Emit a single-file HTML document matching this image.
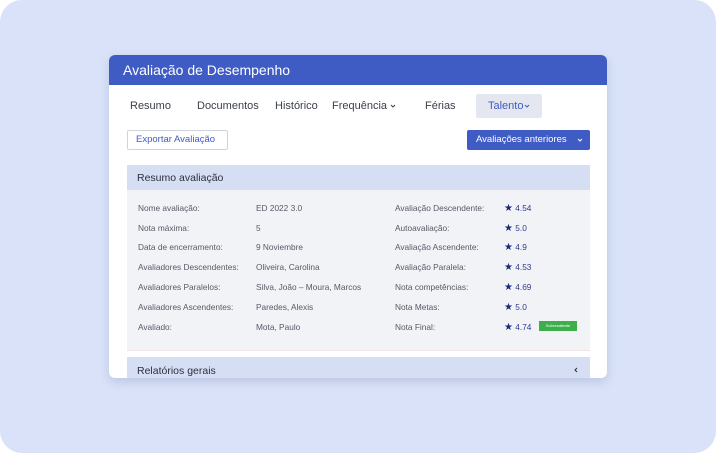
<!DOCTYPE html>
<html><head><meta charset="utf-8"><style>
*{margin:0;padding:0;box-sizing:border-box}
body{width:716px;height:453px;background:#fff;font-family:"Liberation Sans",sans-serif;overflow:hidden}
.bg{position:absolute;left:0;top:0;width:716px;height:453px;background:#d9e2f8;border-radius:22px}
.card{position:absolute;left:109px;top:55px;width:498px;height:323px;background:#fff;border-radius:6px;overflow:hidden;box-shadow:0 4px 10px rgba(60,80,140,.18)}
.hd{height:30px;background:#3f5bc4;color:#fff;font-size:14px;line-height:30px;padding-left:14px}
.t{position:absolute;font-size:11px;color:#3a3f4a;white-space:nowrap}
.tab{top:45px}
.talent{position:absolute;left:367px;top:39px;width:66px;height:24px;background:#e4e7ef;border-radius:2px}
.exp{position:absolute;left:18px;top:75px;width:101px;height:20px;border:1px solid #cfd3dc;border-radius:2px;font-size:9.5px;color:#3f5bc4;line-height:18px;padding-left:8px}
.ant{position:absolute;left:358px;top:75px;width:123px;height:20px;background:#3f5bc4;border-radius:2px;color:#fff;font-size:9.5px;line-height:20px;padding-left:9px}
.sec{position:absolute;left:18px;width:463px}
.sh{height:25px;background:#d5def3;font-size:10.5px;color:#2b3040;line-height:26px;padding-left:10px}
.sb{height:160px;background:#f2f3f7}
.r{position:absolute;font-size:8.3px;color:#555a66;white-space:nowrap}
.v{color:#2e3a8c}
.star{color:#1e2a78;font-size:10px}
.badge{position:absolute;left:430px;top:266px;width:38px;height:10px;background:#3daf4a;color:#fff;font-size:4px;line-height:10px;text-align:center}
svg.ch{display:inline-block;vertical-align:middle}
</style></head><body>
<div class="bg"></div>
<div class="card">
<div class="hd">Avaliação de Desempenho</div>
<div class="talent"></div>
<div class="t tab" style="left:21px">Resumo</div>
<div class="t tab" style="left:88px">Documentos</div>
<div class="t tab" style="left:166px">Histórico</div>
<div class="t tab" style="left:223px">Frequência <svg class="ch" width="6" height="4" viewBox="0 0 6 4"><path d="M1 1l2 2 2-2" fill="none" stroke="#3a3f4a" stroke-width="1"/></svg></div>
<div class="t tab" style="left:316px">Férias</div>
<div class="t tab" style="left:379px;color:#3f5bc4">Talento<svg class="ch" width="6" height="4" viewBox="0 0 6 4" style="margin-left:1px"><path d="M1 1l2 2 2-2" fill="none" stroke="#3f5bc4" stroke-width="1"/></svg></div>
<div class="exp">Exportar Avaliação</div>
<div class="ant">Avaliações anteriores<svg style="position:absolute;right:7px;top:8px" width="6" height="4" viewBox="0 0 6 4"><path d="M1 1l2 2 2-2" fill="none" stroke="#fff" stroke-width="1"/></svg></div>
<div class="sec" style="top:110px"><div class="sh">Resumo avaliação</div><div class="sb"></div></div>
<div style="position:absolute;left:18px;top:295px;width:463px;height:1px;background:#f0e4e4"></div>
<div class="sec" style="top:302px"><div class="sh" style="line-height:28px">Relatórios gerais<svg style="position:absolute;right:12px;top:10px" width="4" height="6" viewBox="0 0 4 6"><path d="M3 1L1 3l2 2" fill="none" stroke="#2b3040" stroke-width="1"/></svg></div></div>

<div class="r" style="left:29px;top:148px">Nome avaliação:</div>
<div class="r" style="left:29px;top:168px">Nota máxima:</div>
<div class="r" style="left:29px;top:187px">Data de encerramento:</div>
<div class="r" style="left:29px;top:207px">Avaliadores Descendentes:</div>
<div class="r" style="left:29px;top:227px">Avaliadores Paralelos:</div>
<div class="r" style="left:29px;top:247px">Avaliadores Ascendentes:</div>
<div class="r" style="left:29px;top:267px">Avaliado:</div>

<div class="r" style="left:147px;top:148px">ED 2022 3.0</div>
<div class="r" style="left:147px;top:168px">5</div>
<div class="r" style="left:147px;top:187px">9 Noviembre</div>
<div class="r" style="left:147px;top:207px">Oliveira, Carolina</div>
<div class="r" style="left:147px;top:227px">Silva, João – Moura, Marcos</div>
<div class="r" style="left:147px;top:247px">Paredes, Alexis</div>
<div class="r" style="left:147px;top:267px">Mota, Paulo</div>

<div class="r" style="left:286px;top:148px">Avaliação Descendente:</div>
<div class="r" style="left:286px;top:168px">Autoavaliação:</div>
<div class="r" style="left:286px;top:187px">Avaliação Ascendente:</div>
<div class="r" style="left:286px;top:207px">Avaliação Paralela:</div>
<div class="r" style="left:286px;top:227px">Nota competências:</div>
<div class="r" style="left:286px;top:247px">Nota Metas:</div>
<div class="r" style="left:286px;top:267px">Nota Final:</div>

<div class="r v" style="left:395px;top:148px"><span class="star">★</span> 4.54</div>
<div class="r v" style="left:395px;top:168px"><span class="star">★</span> 5.0</div>
<div class="r v" style="left:395px;top:187px"><span class="star">★</span> 4.9</div>
<div class="r v" style="left:395px;top:207px"><span class="star">★</span> 4.53</div>
<div class="r v" style="left:395px;top:227px"><span class="star">★</span> 4.69</div>
<div class="r v" style="left:395px;top:247px"><span class="star">★</span> 5.0</div>
<div class="r v" style="left:395px;top:267px"><span class="star">★</span> 4.74</div>
<div class="badge">Sobresaliente</div>
</div>
</body></html>
